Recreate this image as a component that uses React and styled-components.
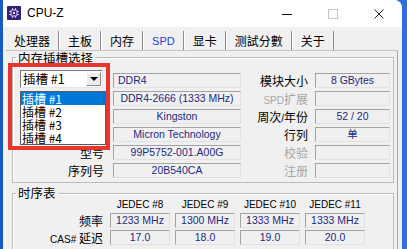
import { Fragment } from 'react';
import styled, { createGlobalStyle } from 'styled-components';

const GlobalStyle = createGlobalStyle`
  html, body {
    margin: 0;
    padding: 0;
  }
  body {
    height: 249px;
    overflow: hidden;
    background: linear-gradient(90deg, #1a5bc0 0%, #2468d2 50%, #2d72dc 100%);
    font-family: "Liberation Sans", "Noto Sans CJK SC", sans-serif;
  }
`;

const Window = styled.div`
  margin-left: 3px;
  width: 399px;
  height: 249px;
  background: #f0f0f0;
  border-top-right-radius: 8px;
  overflow: hidden;
  display: flex;
  flex-direction: column;
`;

const TitleBar = styled.div`
  height: 27px;
  flex: none;
  background: #fff;
  display: flex;
  align-items: center;
  padding-left: 4px;
`;

const AppIcon = styled.svg`
  width: 14px;
  height: 14px;
  margin-right: 6px;
  margin-top: -2px;
`;

const Title = styled.span`
  font-family: "Liberation Sans", sans-serif;
  font-size: 12px;
  color: #000;
  margin-top: -1px;
`;

const Controls = styled.div`
  margin-left: auto;
  display: flex;
  height: 100%;
`;

const CtrlButton = styled.div`
  width: 46px;
  display: flex;
  align-items: center;
  justify-content: center;
`;

const TabBar = styled.div`
  height: 23px;
  flex: none;
  display: flex;
  padding-left: 2px;
`;

const Tab = styled.div`
  margin-top: 4px;
  padding: 0 8px;
  display: flex;
  align-items: center;
  font-family: "Noto Sans CJK SC", sans-serif;
  font-size: 12px;
  line-height: 14px;
  color: ${({ $active }) => ($active ? '#2a3fd1' : '#000')};
  border-left: 1px solid #fff;
  border-right: 1px solid #8c8c8c;
`;

const TabLatin = styled.span`
  font-family: "Liberation Sans", sans-serif;
  font-size: 11px;
`;

const Panel = styled.div`
  flex: 1;
  margin: 0 4px 0 2px;
  border-top: 1px solid #c4c4c4;
  border-right: 1px solid #a8a8a8;
  border-left: 1px solid #fcfcfc;
  padding: 0 3px 0 6px;
`;

const Group = styled.fieldset`
  margin: ${({ $gap }) => $gap || 0}px 0 0 0;
  padding: ${({ $pad }) => $pad || '0 0 4px 0'};
  border: 1px solid #bcbcbc;
  box-shadow: inset 1px 1px 0 #fff;
  min-width: 0;
`;

const Legend = styled.legend`
  margin-left: 3px;
  padding: 0 2px;
  font-family: "Noto Sans CJK SC", sans-serif;
  font-size: 12.5px;
  line-height: ${({ $lh }) => $lh || 13}px;
  color: #000;
`;

const SlotGrid = styled.div`
  display: grid;
  grid-template-columns: 93px 128px 60px 75px;
  grid-auto-rows: 15px;
  column-gap: 7px;
  row-gap: 3px;
`;

const TimingGrid = styled.div`
  display: grid;
  grid-template-columns: 93px repeat(4, 60px);
  grid-template-rows: 12px;
  grid-auto-rows: 15px;
  column-gap: 5px;
  row-gap: 2px;
  margin-left: -1px;
`;

const Label = styled.div`
  text-align: right;
  padding-right: ${({ $pr }) => $pr || 0}px;
  font-family: "Noto Sans CJK SC", sans-serif;
  font-size: 12px;
  line-height: 15px;
  white-space: nowrap;
  color: ${({ $dim }) => ($dim ? '#a6a6a6' : '#000')};
`;

const Lat = styled.span`
  font-family: "Liberation Sans", sans-serif;
  font-size: 10px;
`;

const Field = styled.div`
  box-sizing: border-box;
  height: 15px;
  padding: 0 4px;
  border: 1px solid;
  border-color: #a3a3a3 #e2e2e2 #e2e2e2 #a3a3a3;
  background: #f0f0f0;
  font-family: "Liberation Sans", "Noto Sans CJK SC", sans-serif;
  font-size: 10.5px;
  line-height: 13px;
  color: #1d2b7e;
  white-space: nowrap;
  overflow: hidden;
  text-align: ${({ $left }) => ($left ? 'left' : 'center')};
`;

const Head = styled.div`
  font-family: "Liberation Sans", sans-serif;
  font-size: 10px;
  line-height: 12px;
  text-align: center;
  color: #000;
  white-space: nowrap;
`;

const SlotPicker = styled.div`
  grid-row: span 4;
  position: relative;
  padding-left: 7px;
`;

const Callout = styled.div`
  position: absolute;
  left: -5px;
  top: -10px;
  width: 102px;
  height: 87px;
  box-sizing: border-box;
  border: 4px solid #e8352e;
  pointer-events: none;
`;

const Select = styled.div`
  box-sizing: border-box;
  width: 83px;
  height: 18px;
  margin-top: -3px;
  display: flex;
  align-items: center;
  background: #fff;
  border: 1px solid;
  border-color: #7a7a7a #e6e6e6 #e6e6e6 #7a7a7a;
  font-family: "Noto Sans CJK SC", sans-serif;
  font-size: 12.5px;
  line-height: 16px;
  color: #000;
  padding-left: 2px;
  white-space: pre;
`;

const DropButton = styled.div`
  margin-left: auto;
  margin-right: 1px;
  width: 15px;
  height: 14px;
  box-sizing: border-box;
  background: #ececec;
  border: 1px solid;
  border-color: #fff #8a8a8a #8a8a8a #fff;
  display: flex;
  align-items: center;
  justify-content: center;
`;

const Arrow = styled.span`
  width: 0;
  height: 0;
  border-left: 4px solid transparent;
  border-right: 4px solid transparent;
  border-top: 4px solid #000;
`;

const List = styled.div`
  margin-top: 3px;
  box-sizing: border-box;
  width: 86px;
  border: 1px solid #5a5a5a;
  background: #fff;
`;

const ListItem = styled.div`
  height: 13px;
  padding-left: 1px;
  font-family: "Noto Sans CJK SC", sans-serif;
  font-size: 12px;
  line-height: 13px;
  white-space: pre;
  background: ${({ $active }) => ($active ? '#0078d7' : 'transparent')};
  color: ${({ $active }) => ($active ? '#fff' : '#000')};
`;

const Empty = styled.div``;

const slots = ['插槽 #1', '插槽 #2', '插槽 #3', '插槽 #4'];

const timings = [
  { label: '频率', values: ['1233 MHz', '1300 MHz', '1333 MHz', '1333 MHz'] },
  { label: <><Lat>CAS# </Lat>延迟</>, values: ['17.0', '18.0', '19.0', '20.0'] },
];

const ChipIcon = () => (
  <AppIcon viewBox="0 0 14 14">
    <rect x="0" y="0" width="14" height="14" rx="1" fill="#33207a" />
    <rect x="4" y="4" width="6" height="6" rx="1" fill="none" stroke="#f1d6f6" strokeWidth="1" />
    <rect x="6" y="6" width="2" height="2" fill="#f1d6f6" />
    <g stroke="#f1d6f6" strokeWidth="0.8">
      <line x1="5.5" y1="2" x2="5.5" y2="4" />
      <line x1="8.5" y1="2" x2="8.5" y2="4" />
      <line x1="5.5" y1="10" x2="5.5" y2="12" />
      <line x1="8.5" y1="10" x2="8.5" y2="12" />
      <line x1="2" y1="5.5" x2="4" y2="5.5" />
      <line x1="2" y1="8.5" x2="4" y2="8.5" />
      <line x1="10" y1="5.5" x2="12" y2="5.5" />
      <line x1="10" y1="8.5" x2="12" y2="8.5" />
    </g>
  </AppIcon>
);

export default function App() {
  return (
    <>
      <GlobalStyle />
      <Window>
        <TitleBar>
          <ChipIcon />
          <Title>CPU-Z</Title>
          <Controls>
            <CtrlButton>
              <svg width="10" height="10" viewBox="0 0 10 10">
                <line x1="0" y1="5.5" x2="10" y2="5.5" stroke="#111" strokeWidth="1" />
              </svg>
            </CtrlButton>
            <CtrlButton>
              <svg width="10" height="10" viewBox="0 0 10 10">
                <rect x="0.5" y="0.5" width="9" height="9" fill="none" stroke="#c4c4c4" strokeWidth="1" />
              </svg>
            </CtrlButton>
            <CtrlButton>
              <svg width="10" height="10" viewBox="0 0 10 10">
                <path d="M0.5 0.5 L9.5 9.5 M9.5 0.5 L0.5 9.5" stroke="#222" strokeWidth="1" />
              </svg>
            </CtrlButton>
          </Controls>
        </TitleBar>

        <TabBar>
          <Tab>处理器</Tab>
          <Tab>主板</Tab>
          <Tab>内存</Tab>
          <Tab $active><TabLatin>SPD</TabLatin></Tab>
          <Tab>显卡</Tab>
          <Tab>测試分數</Tab>
          <Tab>关于</Tab>
        </TabBar>

        <Panel>
          <Group $pad="9px 0 4px 0">
            <Legend>内存插槽选择</Legend>
            <SlotGrid>
              <SlotPicker>
                <Callout />
                <Select>
                  {slots[0]}
                  <DropButton><Arrow /></DropButton>
                </Select>
                <List>
                  {slots.map((s, i) => (
                    <ListItem key={s} $active={i === 0}>{s}</ListItem>
                  ))}
                </List>
              </SlotPicker>
              <Field $left>DDR4</Field>
              <Label>模块大小</Label>
              <Field>8 GBytes</Field>

              <Field>DDR4-2666 (1333 MHz)</Field>
              <Label $dim><Lat>SPD</Lat>扩展</Label>
              <Field />

              <Field>Kingston</Field>
              <Label>周次<Lat>/</Lat>年份</Label>
              <Field>52 / 20</Field>

              <Field>Micron Technology</Field>
              <Label>行列</Label>
              <Field>单</Field>

              <Label $pr={2}>型号</Label>
              <Field>99P5752-001.A00G</Field>
              <Label $dim>校验</Label>
              <Field />

              <Label $pr={2}>序列号</Label>
              <Field>20B540CA</Field>
              <Label $dim>注册</Label>
              <Field />
            </SlotGrid>
          </Group>

          <Group $gap={4} $pad="0 0 4px 0">
            <Legend $lh={12}>时序表</Legend>
            <TimingGrid>
              <Empty />
              <Head>JEDEC #8</Head>
              <Head>JEDEC #9</Head>
              <Head>JEDEC #10</Head>
              <Head>JEDEC #11</Head>
              {timings.map((row, r) => (
                <Fragment key={r}>
                  <Label $pr={2}>{row.label}</Label>
                  {row.values.map((v, c) => (
                    <Field key={c}>{v}</Field>
                  ))}
                </Fragment>
              ))}
            </TimingGrid>
          </Group>
        </Panel>
      </Window>
    </>
  );
}
